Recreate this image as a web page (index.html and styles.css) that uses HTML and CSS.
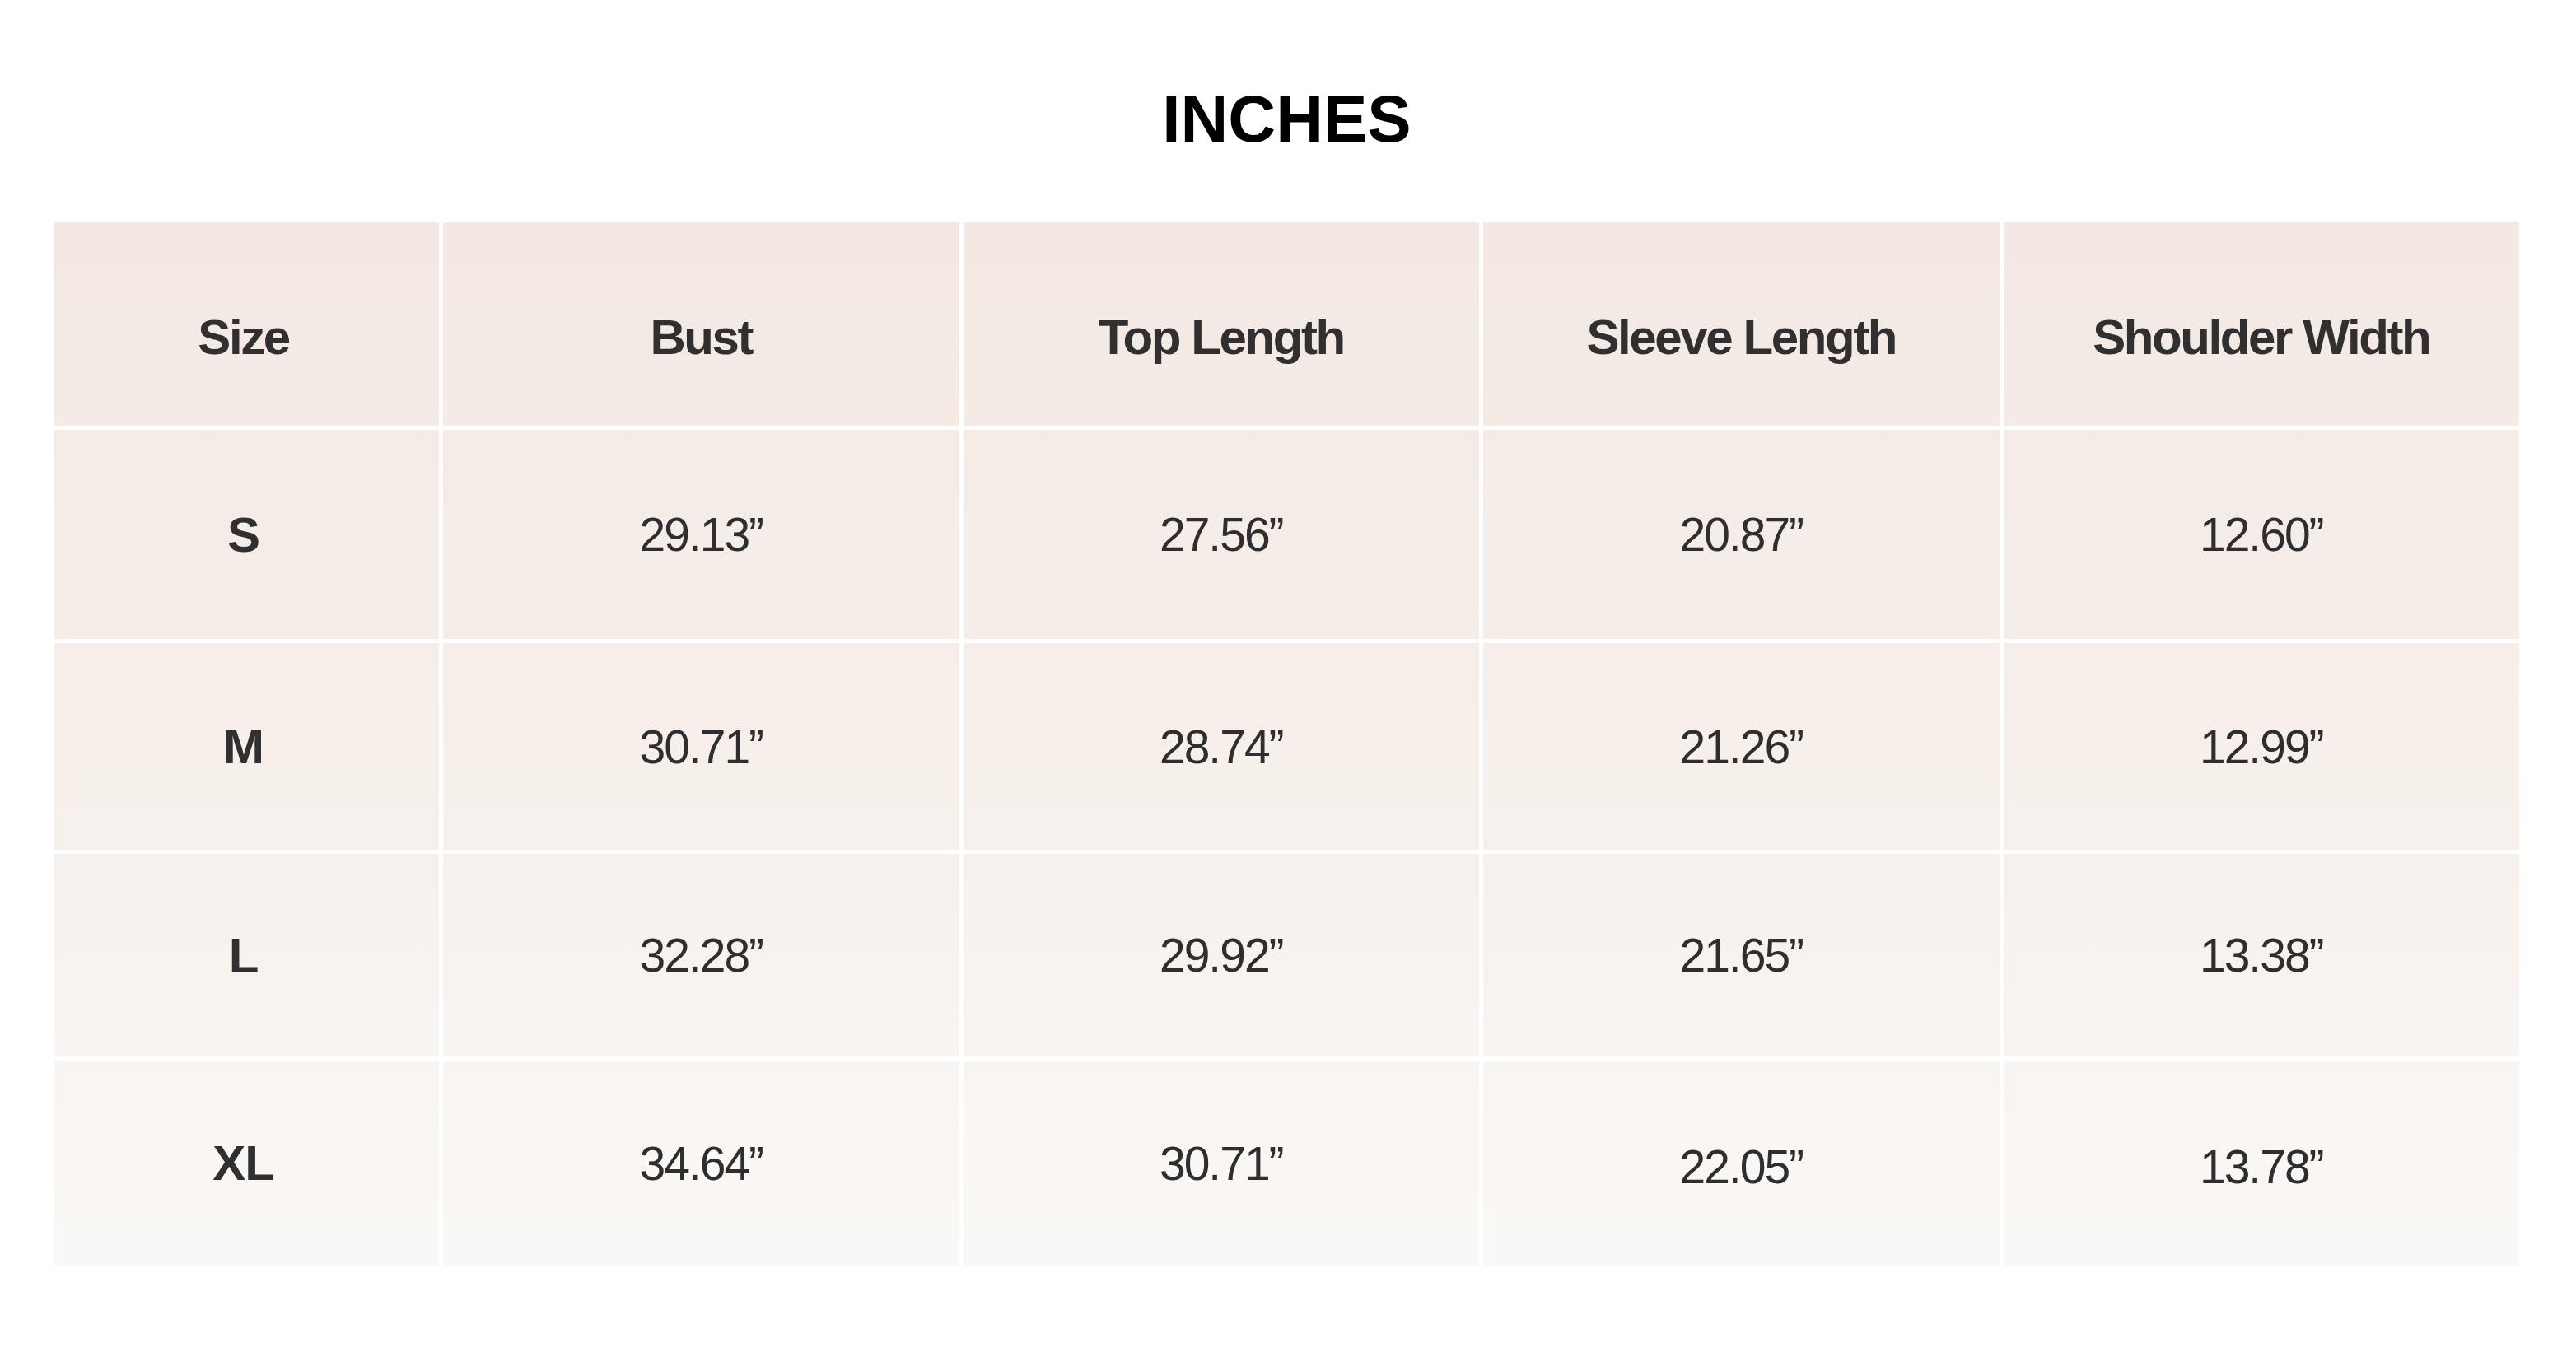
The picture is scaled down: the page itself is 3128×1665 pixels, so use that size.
FILE: index.html
```html
<!DOCTYPE html>
<html lang="en">
<head>
<meta charset="utf-8">
<title>Size Chart - Inches</title>
<link rel="stylesheet" href="styles.css">
</head>
<body>
<main class="page">
  <h1 class="title">INCHES</h1>
  <div class="chart">
    <div class="cell head first">Size</div>
    <div class="cell head">Bust</div>
    <div class="cell head">Top Length</div>
    <div class="cell head">Sleeve Length</div>
    <div class="cell head">Shoulder Width</div>

    <div class="cell size first">S</div>
    <div class="cell num">29.13”</div>
    <div class="cell num">27.56”</div>
    <div class="cell num">20.87”</div>
    <div class="cell num">12.60”</div>

    <div class="cell size first">M</div>
    <div class="cell num">30.71”</div>
    <div class="cell num">28.74”</div>
    <div class="cell num">21.26”</div>
    <div class="cell num">12.99”</div>

    <div class="cell size first">L</div>
    <div class="cell num">32.28”</div>
    <div class="cell num">29.92”</div>
    <div class="cell num">21.65”</div>
    <div class="cell num">13.38”</div>

    <div class="cell size first">XL</div>
    <div class="cell num">34.64”</div>
    <div class="cell num">30.71”</div>
    <div class="cell num low">22.05”</div>
    <div class="cell num low">13.78”</div>
  </div>
</main>
</body>
</html>
```

FILE: styles.css
```css
html, body {
  margin: 0;
  padding: 0;
  background: #ffffff;
}

body {
  font-family: "Liberation Sans", Arial, Helvetica, sans-serif;
  color: #2f2f2f;
}

.page {
  padding: 105px 69px 0 66px;
}

.title {
  margin: 0;
  text-align: center;
  font-size: 80px;
  line-height: 1;
  font-weight: 700;
  color: #000000;
  letter-spacing: 0;
}

.chart {
  margin-top: 85px;
  display: grid;
  grid-template-columns: 467px repeat(4, 1fr);
  grid-template-rows: 247px 254px 251px 246px 249px;
  column-gap: 5px;
  row-gap: 5px;
}

.cell {
  display: flex;
  align-items: center;
  justify-content: center;
  box-sizing: border-box;
  background: linear-gradient(180deg, #f3e9e2 0px, #f3e9e2 270px, #f6efea 900px, #faf8f6 1540px, #faf9f7 1665px) fixed;
}

.first {
  padding-right: 8px;
}

.head {
  padding-top: 32px;
  font-size: 60px;
  font-weight: 700;
  letter-spacing: -2.4px;
  color: #303030;
}

.size {
  font-size: 60px;
  font-weight: 700;
  letter-spacing: -1px;
  color: #303030;
}

.num {
  font-size: 57px;
  font-weight: 400;
  letter-spacing: -2px;
  color: #2e2e2e;
}

.low {
  padding-top: 8px;
}
```
